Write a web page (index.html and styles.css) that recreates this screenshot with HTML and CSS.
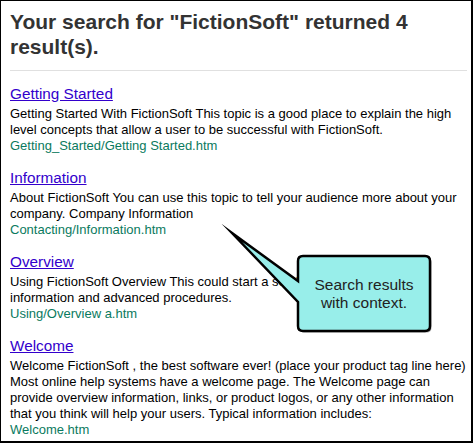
FILE: index.html
```html
<!DOCTYPE html>
<html>
<head>
<meta charset="utf-8">
<link rel="stylesheet" href="styles.css">
</head>
<body>
<div class="frame">
  <h1 class="title">Your search for "FictionSoft" returned 4 result(s).</h1>
  <hr class="rule">
  <div class="results">
    <div class="result">
      <a class="link" href="#">Getting Started</a>
      <div class="abstract">Getting Started With FictionSoft This topic is a good place to explain the high level concepts that allow a user to be successful with FictionSoft.</div>
      <div class="url">Getting_Started/Getting Started.htm</div>
    </div>
    <div class="result">
      <a class="link" href="#">Information</a>
      <div class="abstract">About FictionSoft You can use this topic to tell your audience more about your company. Company Information</div>
      <div class="url">Contacting/Information.htm</div>
    </div>
    <div class="result">
      <a class="link" href="#">Overview</a>
      <div class="abstract">Using FictionSoft Overview This could start a section on more detailed information and advanced procedures.</div>
      <div class="url">Using/Overview a.htm</div>
    </div>
    <div class="result">
      <a class="link" href="#">Welcome</a>
      <div class="abstract">Welcome FictionSoft , the best software ever! (place your product tag line here) Most online help systems have a welcome page. The Welcome page can provide overview information, links, or product logos, or any other information that you think will help your users. Typical information includes:</div>
      <div class="url">Welcome.htm</div>
    </div>
  </div>
  <div class="callout">
    <svg class="callout-shape" width="206" height="106" viewBox="0 0 206 106">
      <path class="shadow" d="M75,27 H197 Q202,27 202,32 V97 Q202,102 197,102 H75 Q70,102 70,97 V73 L4,4 L70,52 V32 Q70,27 75,27 Z" transform="translate(1.5,1.5)"/>
      <path class="bubble" d="M75,27 H197 Q202,27 202,32 V97 Q202,102 197,102 H75 Q70,102 70,97 V73 L4,4 L70,52 V32 Q70,27 75,27 Z"/>
    </svg>
    <div class="callout-text">Search results<br>with context.</div>
  </div>
</div>
</body>
</html>
```

FILE: styles.css
```css
html, body {
  margin: 0;
  padding: 0;
  background: #fff;
}

.frame {
  position: relative;
  width: 473px;
  height: 443px;
  box-sizing: border-box;
  border: 1px solid #000;
  border-right-width: 2px;
  border-bottom-width: 2px;
  padding: 8px 4px 0 9px;
  overflow: hidden;
  font-family: "Liberation Sans", Arial, sans-serif;
}

.title {
  margin: 0;
  font-size: 21px;
  line-height: 25px;
  font-weight: bold;
  color: #333;
}

.rule {
  margin: 11px 0 14px 0;
  border: 0;
  height: 1px;
  background: #e0e0e0;
}

.results {
  display: flex;
  flex-direction: column;
  gap: 15px;
}

.link {
  display: block;
  font-size: 15.3px;
  line-height: 18px;
  color: #3300cc;
  text-decoration: underline;
  margin-bottom: 3px;
}

.abstract,
.url {
  font-size: 13px;
  line-height: 16px;
  color: #000;
}

.url {
  color: #0a7a5e;
}

.callout {
  position: absolute;
  left: 227px;
  top: 228px;
  width: 206px;
  height: 106px;
}

.callout-shape {
  position: absolute;
  left: 0;
  top: 0;
  overflow: visible;
}

.shadow {
  fill: #666;
  opacity: 0.6;
}

.bubble {
  fill: #98eeea;
  stroke: #000;
  stroke-width: 2.5;
  stroke-linejoin: miter;
  stroke-miterlimit: 20;
}

.callout-text {
  position: absolute;
  left: 71px;
  top: 28px;
  width: 130px;
  height: 73px;
  display: flex;
  align-items: center;
  justify-content: center;
  text-align: center;
  font-size: 15.5px;
  line-height: 17.5px;
  color: #222;
}
```
